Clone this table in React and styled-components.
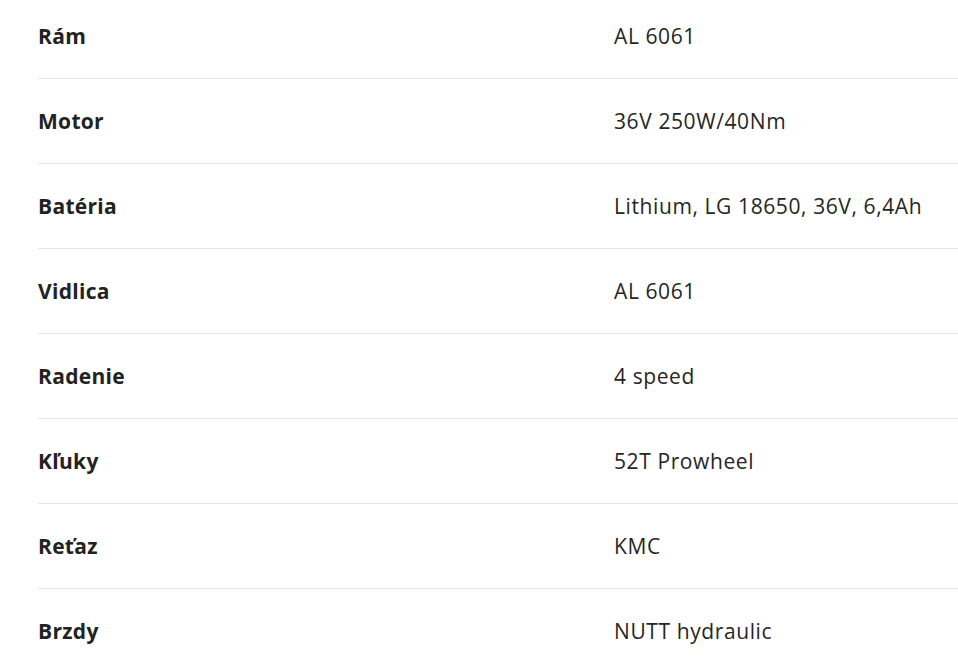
import styled, { createGlobalStyle } from 'styled-components';

const GlobalStyle = createGlobalStyle`
  html, body {
    margin: 0;
    padding: 0;
    background: #ffffff;
  }
  body {
    font-family: "Open Sans", "Liberation Sans", sans-serif;
    color: #222222;
    overflow: hidden;
  }
`;

const SpecTable = styled.div`
  padding-left: 38px;
  display: flex;
  flex-direction: column;
`;

const SpecRow = styled.div`
  display: grid;
  grid-template-columns: 576px 1fr;
  align-items: center;
  padding: 30px 0;
  line-height: 24px;
  border-bottom: 1px solid #e6e6e6;

  &:first-child {
    padding-top: 24px;
  }
`;

const SpecLabel = styled.span`
  font-size: 21px;
  font-weight: 700;
  letter-spacing: 0.3px;
  color: #222222;
`;

const SpecValue = styled.span`
  font-size: 21px;
  font-weight: 400;
  letter-spacing: 0.6px;
  color: #262626;
  white-space: nowrap;
`;

const specs = [
  ['Rám', 'AL 6061'],
  ['Motor', '36V 250W/40Nm'],
  ['Batéria', 'Lithium, LG 18650, 36V, 6,4Ah'],
  ['Vidlica', 'AL 6061'],
  ['Radenie', '4 speed'],
  ['Kľuky', '52T Prowheel'],
  ['Reťaz', 'KMC'],
  ['Brzdy', 'NUTT hydraulic'],
];

function App() {
  return (
    <>
      <GlobalStyle />
      <SpecTable>
        {specs.map(([label, value]) => (
          <SpecRow key={label}>
            <SpecLabel>{label}</SpecLabel>
            <SpecValue>{value}</SpecValue>
          </SpecRow>
        ))}
      </SpecTable>
    </>
  );
}

export default App;
